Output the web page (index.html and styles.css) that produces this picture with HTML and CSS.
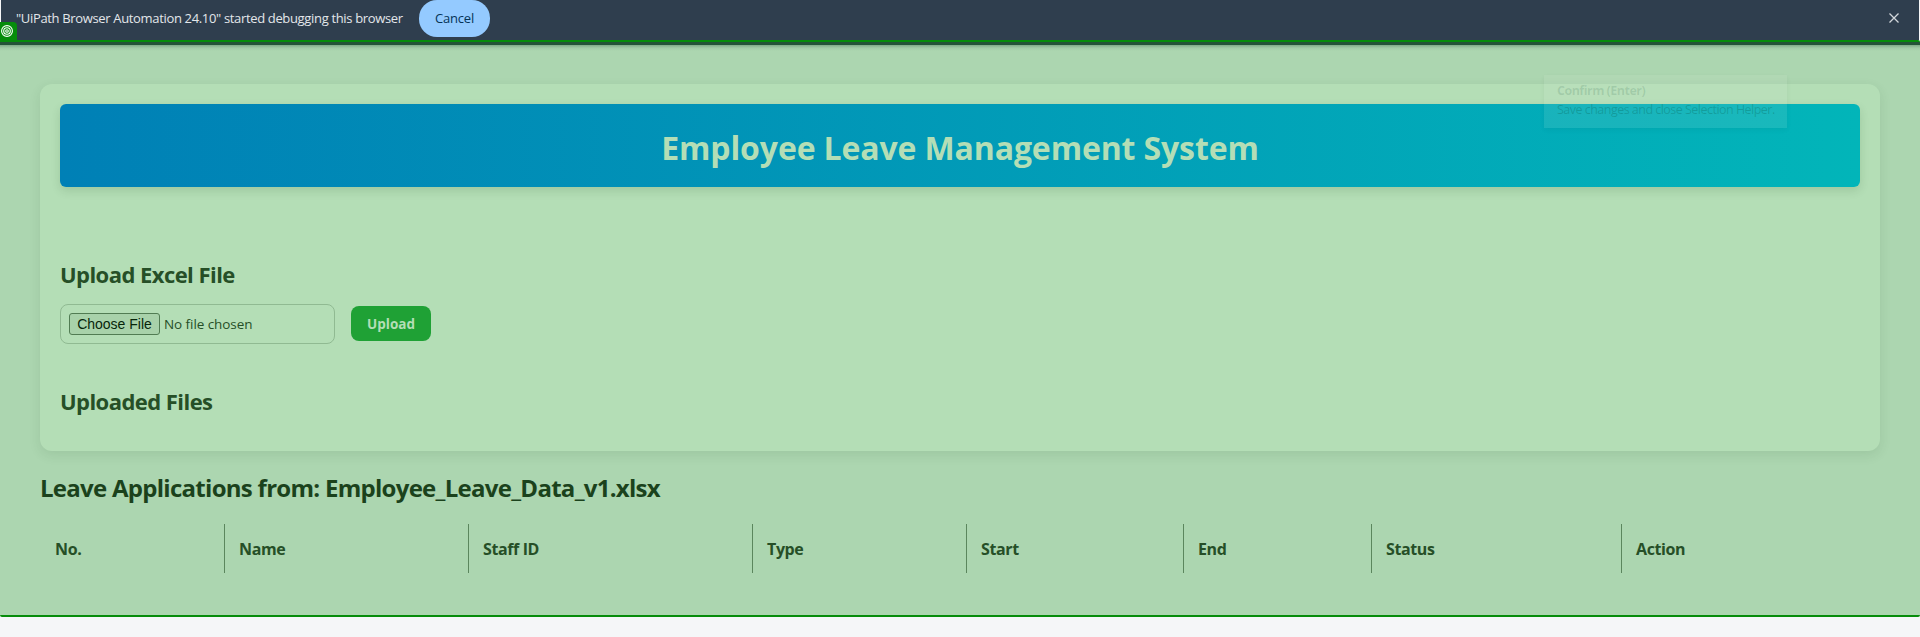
FILE: index.html
```html
<!DOCTYPE html>
<html lang="en">
<head>
<meta charset="utf-8">
<title>Employee Leave Management System</title>
<link rel="stylesheet" href="styles.css">
</head>
<body>
<header class="infobar">
  <span class="infobar-text">"UiPath Browser Automation 24.10" started debugging this browser</span>
  <button class="cancel"><span>Cancel</span></button>
  <svg class="close" width="10" height="10" viewBox="0 0 10 10"><path d="M.5 .5l9 9M9.5 .5l-9 9"/></svg>
  <span class="target">
    <svg width="12" height="12" viewBox="0 0 12 12"><circle cx="6" cy="6" r="5.4"/><circle cx="6" cy="6" r="3.3"/><circle cx="6" cy="6" r="1.3"/></svg>
  </span>
</header>
<main class="page">
  <section class="panel">
    <div class="banner"><h1>Employee Leave Management System</h1></div>
    <h2 class="upload-title">Upload Excel File</h2>
    <form class="upload">
      <div class="file"><span class="choose"><span>Choose File</span></span><span class="chosen">No file chosen</span></div>
      <button type="button" class="submit"><span>Upload</span></button>
    </form>
    <h2 class="files-title">Uploaded Files</h2>
  </section>
  <h2 class="table-title">Leave Applications from: Employee_Leave_Data_v1.xlsx</h2>
  <div class="columns">
    <div>No.</div><div>Name</div><div>Staff ID</div><div>Type</div><div>Start</div><div>End</div><div>Status</div><div>Action</div>
  </div>
  <aside class="hint"><b>Confirm (Enter)</b><span>Save changes and close Selection Helper.</span></aside>
</main>
</body>
</html>
```
FILE: styles.css
```css
* { box-sizing: border-box; }
body { margin: 0; height: 637px; overflow: hidden; background: #f5f6f8; font-family: "Open Sans", "Noto Sans", sans-serif; color: #264f27; }
h1, h2 { margin: 0; font-weight: 700; white-space: nowrap; }
button { border: 0; padding: 0; font-family: inherit; }

.infobar { position: relative; height: 40px; margin: 0 1px; padding: 0 20px 3px 15px; display: flex; align-items: center; background: #2f3e4e; font-size: 13px; color: #e3e6ea; }
.infobar-text { width: 403px; padding-bottom: 1px; white-space: nowrap; letter-spacing: -.34px; }
.cancel { height: 37px; width: 71px; padding-bottom: 1px; border-radius: 18px; background: #94caff; color: #043357; font-size: 13px; font-weight: 500; letter-spacing: -.2px; }
.close { margin: 0 0 2px auto; fill: none; stroke: #d3d7db; stroke-width: 1.3; }
.target { position: absolute; left: -1px; top: 22px; width: 17px; height: 20px; padding: 0 3px 2px 0; display: flex; align-items: center; justify-content: center; background: #068c0b; border-radius: 0 4px 0 0; z-index: 1; }
.target svg { flex: none; fill: none; stroke: #fff; stroke-width: 1.1; }

.page { position: relative; height: 577px; padding: 42px 40px 0; border-top: 2px solid #068c0b; border-bottom: 2px solid #068c0b; border-radius: 2px; background: linear-gradient(#245438 0 3px, #7faa88 3px, #a2cca7 6px, #acd6b0 9px); }
.panel { height: 367px; padding: 20px; border-radius: 12px; background: #b4deb6; box-shadow: 0 4px 12px rgba(30, 70, 30, .1); }
.banner { height: 83px; padding-top: 5px; display: flex; align-items: center; justify-content: center; border-radius: 6px; background: linear-gradient(90deg, #0080b6, #02b5b9); box-shadow: 0 4px 10px rgba(30, 70, 30, .14); }
h1 { font-size: 32px; line-height: 44px; letter-spacing: -.13px; color: #b4deb6; }
.upload-title, .files-title { font-size: 22px; line-height: 30px; letter-spacing: -.55px; }
.upload-title { margin-top: 72px; }
.upload { display: flex; align-items: center; gap: 16px; margin-top: 15px; }
.file { display: flex; align-items: center; gap: 4px; width: 275px; height: 40px; padding-left: 8px; padding-bottom: 1px; border: 1px solid #90ba92; border-radius: 8px; font-size: 13.5px; }
.choose { width: 91px; height: 22px; display: flex; align-items: center; justify-content: center; border: 1px solid #517c53; border-radius: 3px; background: #a8d2aa; color: #06260a; font: 14px "Liberation Sans", sans-serif; }
.chosen { letter-spacing: -.07px; }
.submit { width: 80px; height: 35px; margin-bottom: 1px; border-radius: 8px; background: #1fa135; color: #b4deb6; font-size: 13.5px; font-weight: 700; }
.files-title { margin-top: 42px; }
.table-title { margin-top: 20px; font-size: 24px; line-height: 34px; letter-spacing: -.72px; color: #1b421c; }
.columns { display: grid; grid-template-columns: 184px 244px 284px 214px 217px 188px 250px 1fr; height: 49px; margin-top: 19px; font-size: 16px; font-weight: 700; letter-spacing: -.38px; }
.columns div { display: flex; align-items: center; padding: 1px 0 0 14px; border-left: 1px solid #5b865d; }
.columns div:first-child { border-left-color: transparent; }
.hint { position: absolute; left: 1544px; top: 33px; width: 243px; height: 53px; padding: 6px 13px; display: flex; flex-direction: column; background: rgba(215, 235, 220, .11); box-shadow: 0 2px 5px rgba(0, 40, 20, .05); font-size: 12.5px; line-height: 19px; color: rgba(0, 65, 45, .22); white-space: nowrap; letter-spacing: -.52px; }
.hint b { color: rgba(0, 65, 45, .13); }
```
